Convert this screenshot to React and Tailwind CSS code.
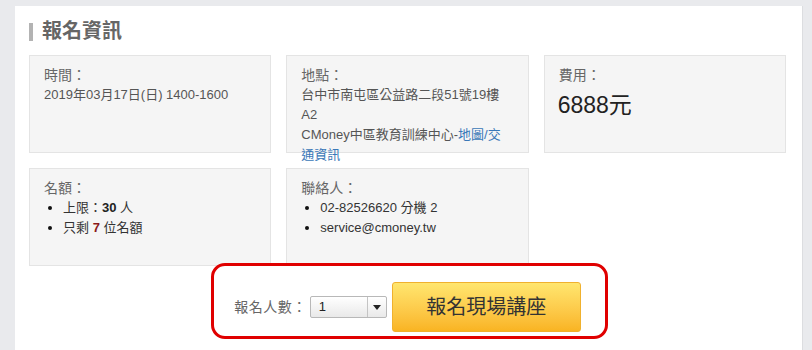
import React from "react";

const font = { fontFamily: '"Liberation Sans", "Noto Sans CJK TC", sans-serif' };

function Box({ children, className = "" }) {
  return (
    <div className={"h-[98px] bg-[#f5f5f5] border border-[#e4e4e4] pl-[14px] pr-[10px] pt-[9px] text-[13px] leading-[20px] text-[#555] " + className}>
      {children}
    </div>
  );
}

function Label({ children }) {
  return <div className="text-[14px] leading-[20px] text-[#666]">{children}</div>;
}

export default function App() {
  return (
    <div style={font} className="w-[812px] h-[350px] overflow-hidden bg-[#e9eaed] pl-[15px] pr-[9px] pt-[6px]">
      <div className="h-[420px] bg-white border-r border-[#dcdde0] pl-[14px] pr-[16px] pt-[13px]">
        <div className="flex items-center h-[24px]">
          <div className="w-[4px] h-[18px] bg-[#b3b3b3] mt-[2px]" />
          <div className="ml-[9px] text-[20px] leading-[24px] font-bold text-[#666]">報名資訊</div>
        </div>
        <div className="grid grid-cols-3 gap-x-[15px] gap-y-[15px] mt-[12px]">
          <Box>
            <Label>時間：</Label>
            <div className="whitespace-nowrap">2019年03月17日(日) 1400-1600</div>
          </Box>
          <Box>
            <Label>地點：</Label>
            <div className="whitespace-nowrap">台中市南屯區公益路二段51號19樓</div>
            <div>A2</div>
            <div className="whitespace-nowrap">
              CMoney中區教育訓練中心-<a className="text-[#3a78b8]">地圖/交</a>
            </div>
            <div className="text-[#3a78b8]">通資訊</div>
          </Box>
          <Box>
            <Label>費用：</Label>
            <div className="-ml-[1px] text-[23px] leading-[40px] text-[#222]">6888元</div>
          </Box>
          <Box>
            <Label>名額：</Label>
            <ul className="list-disc pl-[19px] text-[#333] marker:text-[#111]">
              <li>上限：<span className="font-semibold text-[#222]">30</span> 人</li>
              <li>只剩 <span className="font-semibold text-[#8b1a1a]">7</span> 位名額</li>
            </ul>
          </Box>
          <Box>
            <Label>聯絡人：</Label>
            <ul className="list-disc pl-[19px] text-[#333] marker:text-[#111]">
              <li>02-82526620 分機 2</li>
              <li>service@cmoney.tw</li>
            </ul>
          </Box>
        </div>
        <div className="flex justify-center mt-[16px]">
          <div className="relative flex items-center">
            <div className="absolute left-[-23px] right-[-27px] top-[-19px] bottom-[-7px] border-[3px] border-[#e00000] rounded-[14px] pointer-events-none" />
            <span className="text-[14px] text-[#666] tracking-[0.5px]">報名人數：</span>
            <div className="ml-[3px] flex items-center w-[77px] h-[22px] border border-[#b8b8b8] rounded-[2px] bg-gradient-to-b from-white to-[#e9e9e9]">
              <span className="flex-1 pl-[8px] text-[13px] text-[#222]">1</span>
              <div className="w-[19px] h-full border-l border-[#c4c4c4] flex items-center justify-center">
                <svg width="8" height="5" viewBox="0 0 8 5"><path d="M0 0 L8 0 L4 5 Z" fill="#222" /></svg>
              </div>
            </div>
            <button className="ml-[5px] w-[189px] h-[50px] rounded-[3px] border border-[#f0b12e] bg-gradient-to-b from-[#ffe66e] to-[#f9b421] text-[20px] text-[#333]">
              報名現場講座
            </button>
          </div>
        </div>
      </div>
    </div>
  );
}
